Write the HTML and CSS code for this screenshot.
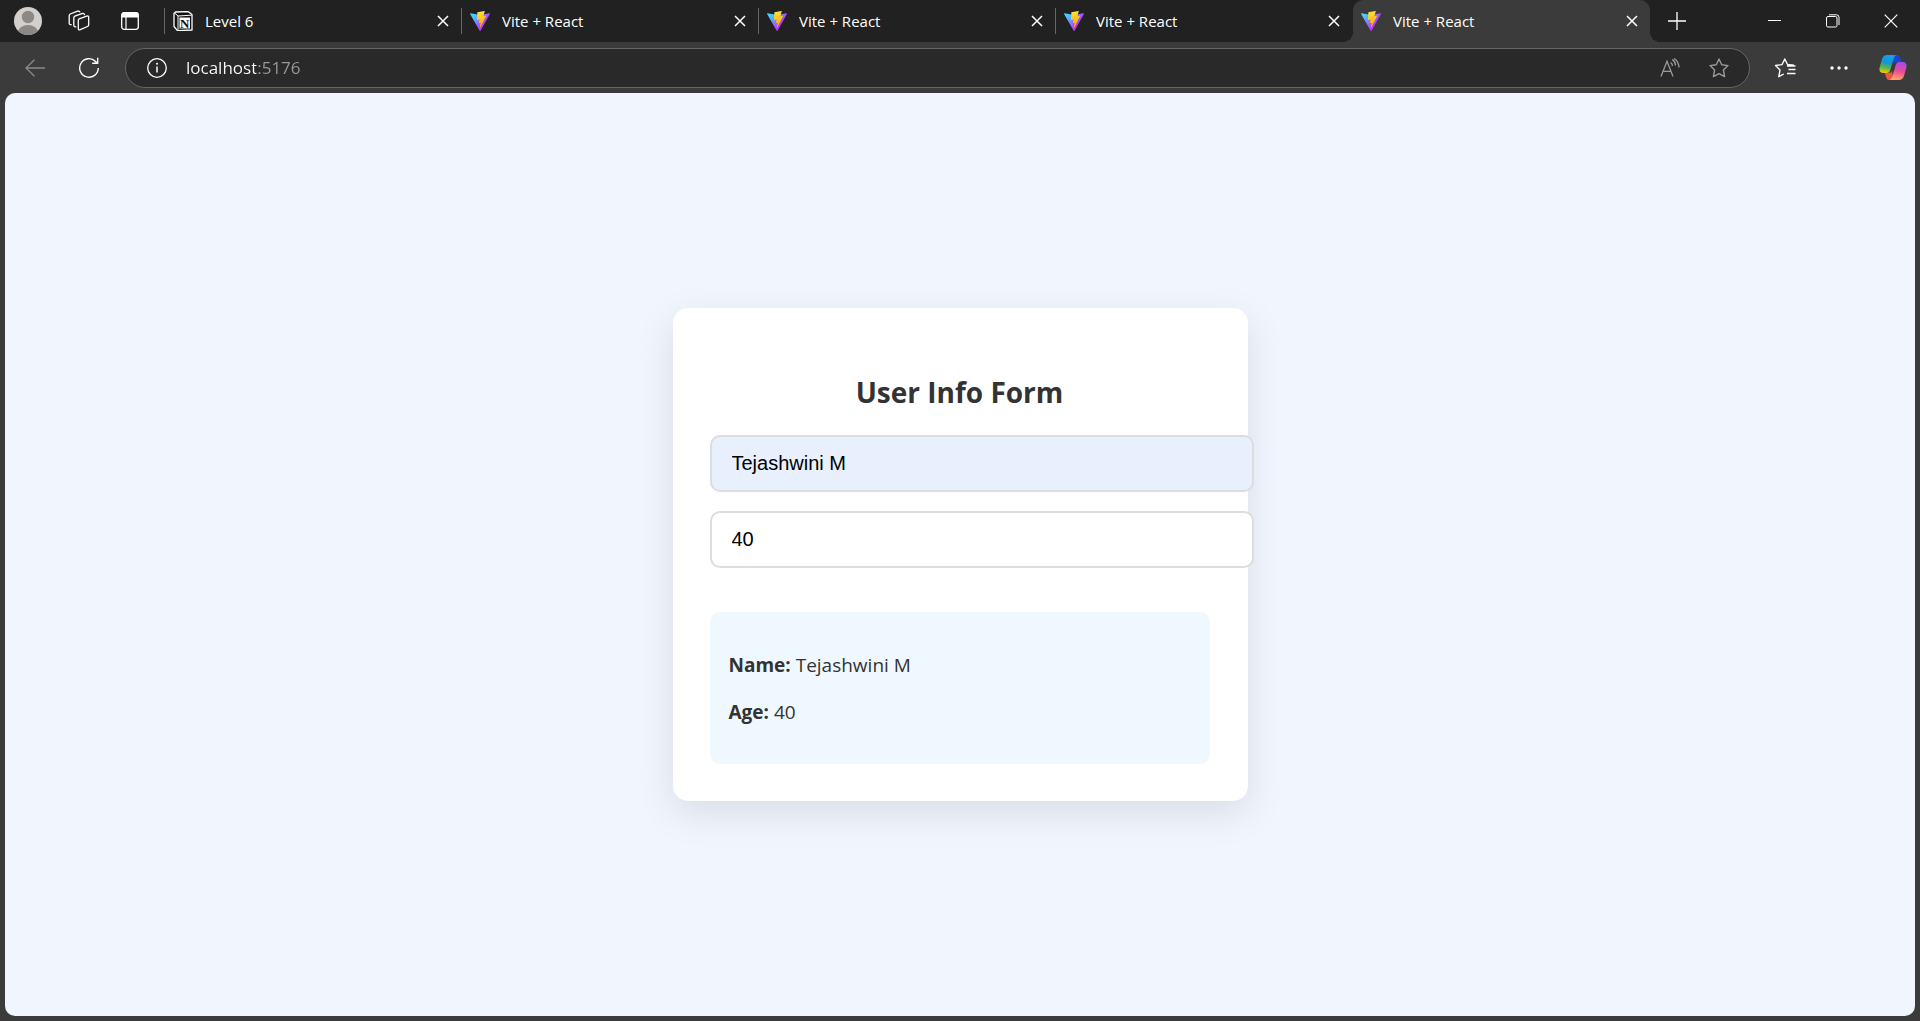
FILE: index.html
```html
<!DOCTYPE html>
<html lang="en">
<head>
<meta charset="utf-8">
<title>Vite + React</title>
<link rel="stylesheet" href="styles.css">
</head>
<body>
<svg class="defs" aria-hidden="true">
  <defs>
    <linearGradient id="vite-body" x1="0%" y1="33%" x2="58%" y2="78%"><stop offset="0" stop-color="#41d1ff"/><stop offset="1" stop-color="#bd34fe"/></linearGradient>
    <linearGradient id="vite-bolt" x1="43%" y1="2%" x2="50%" y2="89%"><stop offset="0" stop-color="#ffea83"/><stop offset=".083" stop-color="#ffdd35"/><stop offset="1" stop-color="#ffa800"/></linearGradient>
  </defs>
  <symbol id="vite" viewBox="0 0 256 257">
    <path fill="url(#vite-body)" d="M255.153 37.938L134.897 252.976c-2.483 4.44-8.862 4.466-11.382.048L.875 37.958c-2.746-4.814 1.371-10.646 6.827-9.67l120.385 21.517a6.537 6.537 0 0 0 2.322-.004l117.867-21.483c5.438-.991 9.574 4.796 6.877 9.62Z"/>
    <path fill="url(#vite-bolt)" d="M185.432.063L96.44 17.501a3.268 3.268 0 0 0-2.634 3.014l-5.474 92.456a3.268 3.268 0 0 0 3.997 3.378l24.777-5.718c2.318-.535 4.413 1.507 3.936 3.838l-7.361 36.047c-.495 2.426 1.782 4.5 4.151 3.78l15.304-4.649c2.372-.72 4.652 1.36 4.15 3.788l-11.698 56.621c-.732 3.542 3.979 5.473 5.943 2.437l1.313-2.028l72.516-144.72c1.215-2.423-.88-5.186-3.54-4.672l-25.505 4.922c-2.396.462-4.435-1.77-3.759-4.114l16.646-57.705c.677-2.35-1.37-4.583-3.769-4.113Z"/>
  </symbol>
  <symbol id="cross" viewBox="0 0 12 12"><path d="M1 1l10 10M11 1L1 11" fill="none" stroke="currentColor" stroke-width="1.5"/></symbol>
  <symbol id="star" viewBox="0 0 22 22"><path d="M11 2l2.700 5.800 6.300.8-4.600 4.400 1.200 6.600L11 16.600l-5.600 3 1.200-6.600L2 8.600l6.300-.8z" fill="none" stroke="currentColor" stroke-width="1.4" stroke-linejoin="round"/></symbol>
</svg>

<header class="browser">
  <div class="tabstrip">
    <div class="leading">
      <button class="icon-button" aria-label="Profile">
        <svg width="28" height="28" viewBox="0 0 28 28"><clipPath id="face"><circle cx="14" cy="14" r="14"/></clipPath><g clip-path="url(#face)"><rect width="28" height="28" fill="#d2d0ce"/><circle cx="14" cy="10" r="6.200" fill="#8c8886"/><ellipse cx="14" cy="26.500" rx="10.500" ry="8.500" fill="#8c8886"/></g></svg>
      </button>
      <button class="icon-button" aria-label="Workspaces">
        <svg width="22" height="22" viewBox="0 0 22 22" fill="none" stroke="currentColor" stroke-width="1.300" stroke-linejoin="round" stroke-linecap="round"><path d="M11.200 8.800l7.500-2.700q2-.6 2 1.400v7.300q0 1.200-1.200 1.700l-7.200 3.200q-2 .7-2-1.400v-7.800q0-1.200.9-1.700zM7.800 16.800q-2 .3-2-1.700V8q0-1.300 1-1.800l7.800-2.800q1.600-.3 1.900 1.200M3.200 14.700q-2 .2-2-1.700V5.700q0-1.200 1-1.700l7.400-2.800q1.800-.5 2.200.7"/></svg>
      </button>
      <button class="icon-button" aria-label="Tab actions">
        <svg width="20" height="20" viewBox="0 0 20 20"><rect x="1.700" y="1.700" width="16.600" height="16.600" rx="2.500" fill="none" stroke="currentColor" stroke-width="1.300"/><path d="M1.500 6.500V4q0-3 3-3h11q3 0 3 3v2.500z" fill="currentColor"/><path d="M6 6v12" stroke="currentColor" stroke-width="1.200"/></svg>
      </button>
    </div>
    <div class="tab">
      <svg class="favicon" viewBox="0 0 20 20"><path d="M2.500 1L15 .6l4 3V19l-14.500.6L1 15.500V2.500z" fill="#111" stroke="#fff" stroke-width="1.300" stroke-linejoin="round"/><path d="M1.500 2L5 5v14M5 5l13.500-.8" fill="none" stroke="#fff" stroke-width="1"/><rect x="6.500" y="6.500" width="10.500" height="11" fill="#fff"/><text class="notion" x="11.700" y="16.500" text-anchor="middle">N</text></svg>
      <span class="tab-title">Level 6</span>
      <button class="close" aria-label="Close tab"><svg width="12" height="12"><use href="#cross"/></svg></button>
    </div>
    <div class="tab">
      <svg class="favicon"><use href="#vite"/></svg>
      <span class="tab-title">Vite + React</span>
      <button class="close" aria-label="Close tab"><svg width="12" height="12"><use href="#cross"/></svg></button>
    </div>
    <div class="tab">
      <svg class="favicon"><use href="#vite"/></svg>
      <span class="tab-title">Vite + React</span>
      <button class="close" aria-label="Close tab"><svg width="12" height="12"><use href="#cross"/></svg></button>
    </div>
    <div class="tab">
      <svg class="favicon"><use href="#vite"/></svg>
      <span class="tab-title">Vite + React</span>
      <button class="close" aria-label="Close tab"><svg width="12" height="12"><use href="#cross"/></svg></button>
    </div>
    <div class="tab active">
      <svg class="favicon"><use href="#vite"/></svg>
      <span class="tab-title">Vite + React</span>
      <button class="close" aria-label="Close tab"><svg width="12" height="12"><use href="#cross"/></svg></button>
    </div>
    <button class="icon-button" aria-label="New tab"><svg width="18" height="18" viewBox="0 0 18 18"><path d="M9 0v18M0 9h18" stroke="currentColor" stroke-width="1.300"/></svg></button>
    <div class="window-controls">
      <button class="window-button" aria-label="Minimize"><svg width="14" height="14" viewBox="0 0 14 14"><path d="M0 6.500h13" stroke="currentColor"/></svg></button>
      <button class="window-button" aria-label="Restore"><svg width="14" height="14" viewBox="0 0 14 14" fill="none" stroke="currentColor"><rect x=".5" y="2.500" width="10.500" height="10.500" rx="1.500"/><path d="M3 .8h7.500q2.500 0 2.500 2.500V11"/></svg></button>
      <button class="window-button" aria-label="Close"><svg width="14" height="14" viewBox="0 0 14 14"><path d="M.7.7l12.600 12.600M13.300.7L.7 13.300" stroke="currentColor" stroke-width="1.200"/></svg></button>
    </div>
  </div>

  <div class="toolbar">
    <button class="tool muted" aria-label="Back"><svg width="20" height="18" viewBox="0 0 20 18"><path d="M20 9H1M9.500.7L1 9l8.500 8.300" fill="none" stroke="currentColor" stroke-width="1.300"/></svg></button>
    <button class="tool" aria-label="Refresh"><svg width="22" height="22" viewBox="0 0 22 22"><path d="M20.300 11a9.300 9.300 0 1 1-2.700-6.600l1.600 1.700M19.700.8v5.500h-5.500" fill="none" stroke="currentColor" stroke-width="1.400"/></svg></button>
    <div class="address">
      <svg class="info-icon" viewBox="0 0 20 20"><circle cx="10" cy="10" r="9.300" fill="none" stroke="currentColor" stroke-width="1.300"/><circle cx="10" cy="5.800" r="1" fill="currentColor"/><path d="M10 8.600v6" stroke="currentColor" stroke-width="1.500"/></svg>
      <input class="url" type="text" aria-label="Address" value="localhost:5176">
      <button class="address-button" aria-label="Read aloud"><svg width="20" height="20" viewBox="0 0 20 20" fill="none" stroke="currentColor" stroke-width="1.300"><path d="M1 18.500L7 3.300l6 15.200M3 13.300h8M12.300 1.400q3 2 3.300 6.100M10.600 4.500q1.600 1 2 3.400M14.200.5q4.400 3 4.800 9"/></svg></button>
      <button class="address-button" aria-label="Add to favorites"><svg width="22" height="22"><use href="#star"/></svg></button>
    </div>
    <button class="tool" aria-label="Favorites"><svg width="22" height="22" viewBox="0 0 22 22" fill="none" stroke="currentColor" stroke-width="1.400" stroke-linejoin="round"><path d="M20 8.300l-6.500-.8L10.800 2 8 7.600l-6.500.9L6 13l-1.200 6.700 5-2.700M13 9h8.500M14.500 12.500h7M13 16.500h8.500"/></svg></button>
    <button class="tool" aria-label="Settings and more"><svg width="18" height="6" viewBox="0 0 18 6" fill="currentColor"><circle cx="2" cy="3" r="1.700"/><circle cx="9" cy="3" r="1.700"/><circle cx="16" cy="3" r="1.700"/></svg></button>
    <button class="tool" aria-label="Copilot">
      <svg width="28" height="27" viewBox="0 0 28 27">
        <linearGradient id="cp-left" x1=".5" y1="0" x2=".3" y2="1"><stop offset="0" stop-color="#16a0f5"/><stop offset=".4" stop-color="#1694d6"/><stop offset=".7" stop-color="#56b54c"/><stop offset="1" stop-color="#f8c800"/></linearGradient>
        <linearGradient id="cp-right" x1=".6" y1="0" x2=".4" y2="1"><stop offset="0" stop-color="#a34bf0"/><stop offset=".5" stop-color="#ec4a92"/><stop offset="1" stop-color="#ffa765"/></linearGradient>
        <path d="M14 1h4q2.200 0 2.900 2.200L22.500 8H18q-2.400 0-3.200 2.300z" fill="#1747d0"/>
        <path d="M14 26h-4q-2 0-2.700-2.200L5.800 19H10q2.400 0 3.100-2.300z" fill="#f5543c"/>
        <path d="M8 1h10q-2.200.2-3 2.800l-4 13q-.8 2.200-3 2.200H4.500Q-.4 19 .6 13.500L3 5q1.400-4 5-4z" fill="url(#cp-left)"/>
        <path d="M20 26H10q2.200-.2 3-2.800l4-13q.8-2.200 3-2.200h3.500q4.900 0 3.900 5.500L25 22q-1.400 4-5 4z" fill="url(#cp-right)"/>
      </svg>
    </button>
  </div>
</header>

<main class="page">
  <section class="card">
    <h2 class="card-title">User Info Form</h2>
    <form>
      <input class="field filled" type="text" aria-label="Name" value="Tejashwini M">
      <input class="field" type="text" inputmode="numeric" aria-label="Age" value="40">
    </form>
    <div class="summary">
      <p><strong>Name:</strong> Tejashwini M</p>
      <p><strong>Age:</strong> 40</p>
    </div>
  </section>
</main>
</body>
</html>
```
FILE: styles.css
```css
* {
  box-sizing: border-box;
}

body {
  margin: 0;
  min-height: 100vh;
  display: flex;
  flex-direction: column;
  background: #3b3b3b;
  color: #333;
  font-family: "Open Sans", "Noto Sans", sans-serif;
}

.defs {
  position: absolute;
  width: 0;
  height: 0;
}

button {
  display: flex;
  align-items: center;
  justify-content: center;
  flex: none;
  padding: 0;
  border: 0;
  background: none;
  color: inherit;
}

.browser {
  color: #fff;
}

/* Tab strip */
.tabstrip {
  display: flex;
  align-items: center;
  height: 42px;
  background: #212121;
}

.leading {
  display: flex;
  flex: none;
  padding-left: 2px;
  width: 164px;
}

.icon-button {
  width: 51px;
  height: 42px;
}

.tab {
  position: relative;
  display: flex;
  align-items: center;
  flex: 0 1 297px;
  min-width: 0;
  height: 26px;
  padding: 0 8px;
  border-left: 1px solid #666;
}

.tab.active {
  height: 42px;
  margin: 0 1px;
  border-left: 0;
  border-radius: 10px 10px 0 0;
  background: #3b3b3b;
}

.tab.active::before,
.tab.active::after {
  content: "";
  position: absolute;
  bottom: 0;
  width: 10px;
  height: 10px;
}

.tab.active::before {
  right: 100%;
  background: radial-gradient(circle at 0 0, transparent 10px, #3b3b3b 10px);
}

.tab.active::after {
  left: 100%;
  background: radial-gradient(circle at 100% 0, transparent 10px, #3b3b3b 10px);
}

.favicon {
  flex: none;
  width: 20px;
  height: 20px;
}

.notion {
  fill: #111;
  font: bold 13px "Liberation Serif", serif;
}

.tab-title {
  flex: 1;
  min-width: 0;
  margin-left: 12px;
  overflow: hidden;
  font-size: 15px;
  line-height: 20px;
  white-space: nowrap;
}

.close {
  width: 20px;
  height: 20px;
}

.window-controls {
  display: flex;
  margin-left: auto;
}

.window-button {
  width: 58px;
  height: 42px;
}

/* Toolbar */
.toolbar {
  display: flex;
  align-items: center;
  height: 51px;
  padding-left: 8px;
}

.tool {
  width: 54px;
  height: 40px;
}

.muted {
  color: #8a8a8a;
}

.address {
  display: flex;
  align-items: center;
  flex: 1;
  height: 40px;
  margin: 0 8px 0 9px;
  padding: 0 6px 0 21px;
  border: 1px solid #666;
  border-radius: 20px;
  background: #292929;
}

.info-icon {
  flex: none;
  width: 20px;
  height: 20px;
}

/* The host name is white and the port grey. */
.url {
  flex: 1;
  min-width: 0;
  margin-left: 19px;
  padding: 0;
  border: 0;
  outline: 0;
  background: linear-gradient(to right, #fff 70px, #9a9a9a 70px);
  -webkit-background-clip: text;
  background-clip: text;
  -webkit-text-fill-color: transparent;
  font-family: inherit;
  font-size: 17px;
  line-height: 24px;
}

.address-button {
  width: 49px;
  height: 38px;
  color: #9a9a9a;
}

/* Page */
.page {
  display: flex;
  align-items: center;
  justify-content: center;
  flex: 1;
  margin: 0 5px 5px;
  border-radius: 10px;
  background: #f1f5fe;
}

.card {
  width: 100%;
  max-width: 575px;
  padding: 37px 38px 37px 37px;
  border-radius: 15px;
  background: #fff;
  box-shadow: 0 12px 38px rgba(0, 0, 0, 0.1);
}

.card-title {
  margin: 27px 0 23px;
  font-size: 28px;
  font-weight: 700;
  line-height: 40px;
  text-align: center;
}

/* Content-box sizing lets the fields run past the card's padding. */
.field {
  display: block;
  box-sizing: content-box;
  width: 100%;
  margin-bottom: 19px;
  padding: 15px 20px;
  border: 2px solid #ddd;
  border-radius: 10px;
  outline: 0;
  background: #fff;
  color: #000;
  font-family: "Liberation Sans", Arial, sans-serif;
  font-size: 20px;
  line-height: 23px;
}

.field.filled {
  background: #e8f0fe;
}

.field:last-child {
  margin-bottom: 0;
}

.summary {
  margin-top: 44px;
  padding: 20px 19px 18px;
  border-radius: 10px;
  background: #f0f8ff;
  font-size: 19px;
  line-height: 27px;
}

.summary p {
  margin: 20px 0;
}
```
